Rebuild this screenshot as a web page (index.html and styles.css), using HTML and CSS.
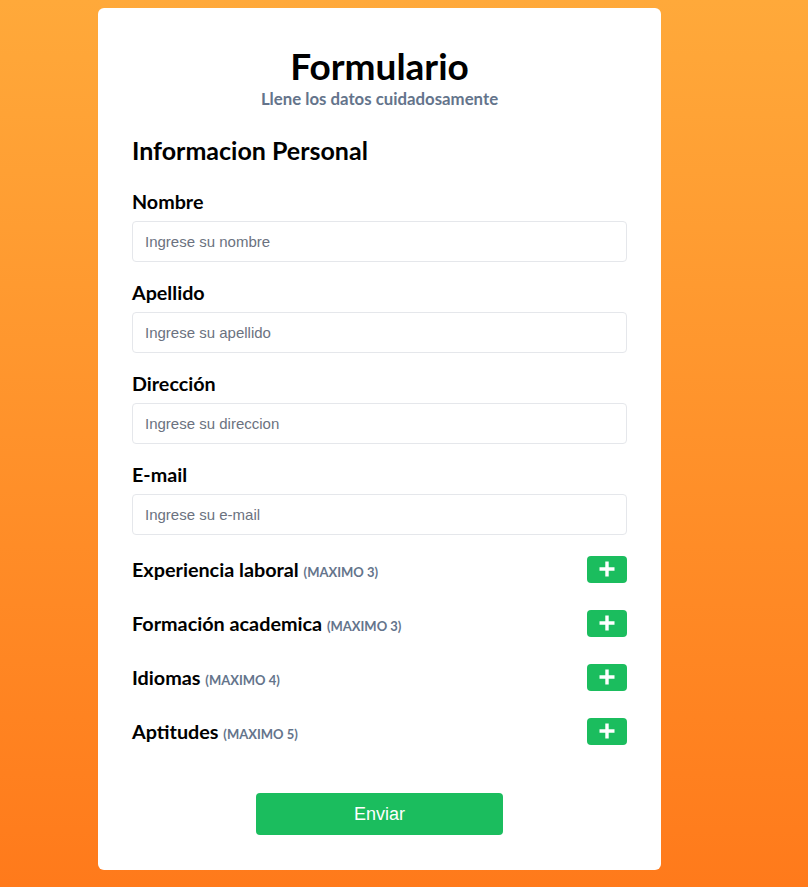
FILE: index.html
```html
<!DOCTYPE html>
<html lang="es">
<head>
<meta charset="utf-8">
<title>Formulario</title>
<link rel="stylesheet" href="styles.css">
</head>
<body>
<main class="card">
  <header class="head">
    <h1 class="title">Formulario</h1>
    <p class="subtitle">Llene los datos cuidadosamente</p>
  </header>
  <h2 class="section">Informacion Personal</h2>
  <div class="field">
    <label class="label" for="nombre">Nombre</label>
    <input class="input" id="nombre" type="text" placeholder="Ingrese su nombre">
  </div>
  <div class="field">
    <label class="label" for="apellido">Apellido</label>
    <input class="input" id="apellido" type="text" placeholder="Ingrese su apellido">
  </div>
  <div class="field">
    <label class="label" for="direccion">Dirección</label>
    <input class="input" id="direccion" type="text" placeholder="Ingrese su direccion">
  </div>
  <div class="field">
    <label class="label" for="email">E-mail</label>
    <input class="input" id="email" type="text" placeholder="Ingrese su e-mail">
  </div>
  <div class="row">
    <span class="row-title">Experiencia laboral <small class="max">(MAXIMO 3)</small></span>
    <button class="add" type="button"><svg viewBox="0 0 20 20" width="20" height="20"><path d="M10 2.5v15M2.5 10h15" stroke="#fff" stroke-width="3.4"/></svg></button>
  </div>
  <div class="row">
    <span class="row-title">Formación academica <small class="max">(MAXIMO 3)</small></span>
    <button class="add" type="button"><svg viewBox="0 0 20 20" width="20" height="20"><path d="M10 2.5v15M2.5 10h15" stroke="#fff" stroke-width="3.4"/></svg></button>
  </div>
  <div class="row">
    <span class="row-title">Idiomas <small class="max">(MAXIMO 4)</small></span>
    <button class="add" type="button"><svg viewBox="0 0 20 20" width="20" height="20"><path d="M10 2.5v15M2.5 10h15" stroke="#fff" stroke-width="3.4"/></svg></button>
  </div>
  <div class="row">
    <span class="row-title">Aptitudes <small class="max">(MAXIMO 5)</small></span>
    <button class="add" type="button"><svg viewBox="0 0 20 20" width="20" height="20"><path d="M10 2.5v15M2.5 10h15" stroke="#fff" stroke-width="3.4"/></svg></button>
  </div>
  <div class="actions">
    <button class="submit" type="submit">Enviar</button>
  </div>
</main>
</body>
</html>
```
FILE: styles.css
```css
html, body {
  margin: 0;
  padding: 0;
}
body {
  min-height: 887px;
  background: linear-gradient(180deg, #ffa93a 0%, #ff7a1b 100%);
  font-family: Lato, "Noto Sans", sans-serif;
  color: #000;
  overflow: hidden;
}
.card {
  box-sizing: border-box;
  width: 563px;
  height: 862px;
  margin: 8px 0 0 98px;
  padding: 35px 34px 0;
  background: #fff;
  border-radius: 6px;
  display: flex;
  flex-direction: column;
}
.head {
  text-align: center;
}
.title {
  margin: 0;
  font-size: 37px;
  line-height: 46px;
  font-weight: 700;
}
.subtitle {
  margin: 0;
  font-size: 16.8px;
  line-height: 20px;
  font-weight: 700;
  color: #64748b;
}
.section {
  margin: 26px 0 0;
  font-size: 25px;
  line-height: 30px;
  font-weight: 700;
}
.field {
  display: flex;
  flex-direction: column;
  margin-top: 25px;
}
.field + .field {
  margin-top: 19px;
}
.label {
  font-size: 19.7px;
  line-height: 24px;
  font-weight: 700;
  margin-bottom: 7px;
}
.input {
  box-sizing: border-box;
  height: 41px;
  width: 100%;
  border: 1px solid #e5e7eb;
  border-radius: 4px;
  padding: 0 12px;
  font-family: "Liberation Sans", Arial, sans-serif;
  font-size: 15px;
  color: #111;
  outline: none;
}
.input::placeholder {
  color: #6b7280;
}
.row {
  display: flex;
  justify-content: space-between;
  align-items: center;
  height: 28px;
  margin-top: 20px;
}
.row + .row {
  margin-top: 26px;
}
.row-title {
  font-size: 19.8px;
  font-weight: 700;
}
.max {
  font-size: 13px;
  font-weight: 700;
  color: #64748b;
}
.add {
  width: 40px;
  height: 27px;
  border: none;
  border-radius: 4px;
  background: #1bbd5e;
  display: flex;
  align-items: center;
  justify-content: center;
  padding: 0;
}
.add svg {
  display: block;
}
.actions {
  display: flex;
  justify-content: center;
  margin-top: 48px;
}
.submit {
  width: 247px;
  height: 42px;
  border: none;
  border-radius: 4px;
  background: #1bbd5e;
  color: #fff;
  font-family: "Liberation Sans", Arial, sans-serif;
  font-size: 18px;
}
```
